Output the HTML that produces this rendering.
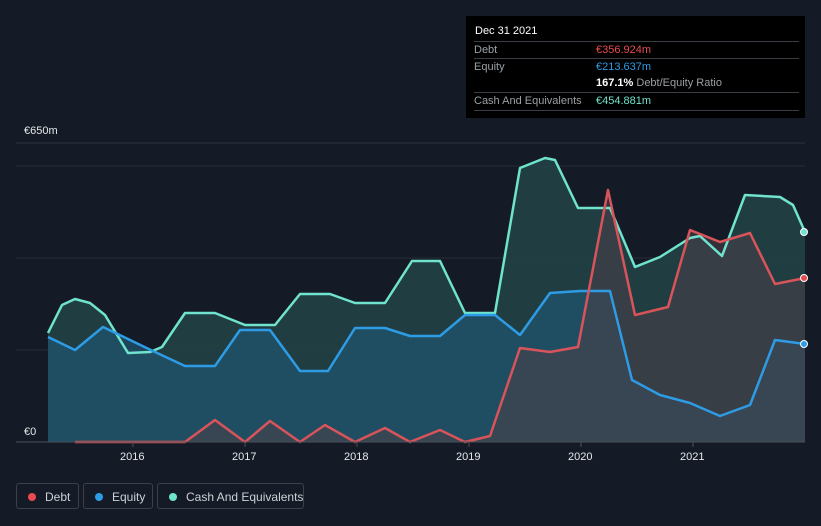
<!DOCTYPE html>
<html><head><style>
body{margin:0;background:#151b26;width:821px;height:526px;overflow:hidden;font-family:"Liberation Sans",sans-serif;position:relative}
.tip{position:absolute;left:466px;top:16px;width:339px;height:102px;background:#000;color:#fff;font-size:11px}
.row{position:absolute;left:8px;right:6px;height:17px;border-top:1px solid #3a3d44;line-height:17px;color:#9aa0a6}
.row span{position:absolute;left:122px}
.leg{position:absolute;top:483px;height:26px;border:1px solid #3b4049;border-radius:3px;color:#ccd0d6;font-size:12px;line-height:26px;box-sizing:border-box;white-space:nowrap}
.leg i{position:absolute;left:11px;top:9px;width:8px;height:8px;border-radius:50%}
.leg b{font-weight:normal;position:absolute;left:28px}
.ax{position:absolute;color:#e6e8ea;font-size:11px}
</style></head><body>
<svg width="821" height="526" style="position:absolute;left:0;top:0">
<line x1="16" y1="143" x2="805" y2="143" stroke="#2c323d"/>
<line x1="16" y1="166" x2="805" y2="166" stroke="#262c37"/>
<line x1="16" y1="258" x2="805" y2="258" stroke="#262c37"/>
<line x1="16" y1="350" x2="805" y2="350" stroke="#262c37"/>
<polygon fill="#23464a" fill-opacity="0.8" points="48,333 62,305 75,299 90,303 105,315 128,353 150,352 162,347 185,313 215,313 245,325 275,325 300,294 330,294 355,303 385,303 412,261 440,261 465,313 495,313 520,168 545,158 555,160 578,208 610,208 635,267 660,257 690,238 700,236 722,256 745,195 780,197 793,205 805,232 805,442 48,442"/>
<polygon fill="#1f5570" fill-opacity="0.7" points="48,337 75,350 103,327 130,340 155,352 185,366 215,366 240,330 270,330 300,371 328,371 355,328 385,328 410,336 440,336 465,315 495,315 520,335 550,293 580,291 610,291 632,380 660,395 690,403 720,416 750,405 775,340 805,344 805,442 48,442"/>
<polygon fill="#4a3f48" fill-opacity="0.6" points="75,442 185,442 215,420 245,442 270,421 300,442 325,425 355,442 385,428 410,442 440,430 465,442 490,436 520,348 550,352 578,347 608,190 635,315 668,307 690,230 720,242 750,233 775,284 805,278 805,442"/>
<polyline fill="none" stroke="#6fe3cd" stroke-width="2.5" stroke-linejoin="round" points="48,333 62,305 75,299 90,303 105,315 128,353 150,352 162,347 185,313 215,313 245,325 275,325 300,294 330,294 355,303 385,303 412,261 440,261 465,313 495,313 520,168 545,158 555,160 578,208 610,208 635,267 660,257 690,238 700,236 722,256 745,195 780,197 793,205 805,232"/>
<polyline fill="none" stroke="#2e9be5" stroke-width="2.5" stroke-linejoin="round" points="48,337 75,350 103,327 130,340 155,352 185,366 215,366 240,330 270,330 300,371 328,371 355,328 385,328 410,336 440,336 465,315 495,315 520,335 550,293 580,291 610,291 632,380 660,395 690,403 720,416 750,405 775,340 805,344"/>
<polyline fill="none" stroke="#d9545a" stroke-width="2.5" stroke-linejoin="round" points="75,442 185,442 215,420 245,442 270,421 300,442 325,425 355,442 385,428 410,442 440,430 465,442 490,436 520,348 550,352 578,347 608,190 635,315 668,307 690,230 720,242 750,233 775,284 805,278"/>
<line x1="16" y1="442" x2="805" y2="442" stroke="#4a505a"/>
<g stroke="#4a505a"><line x1="133" y1="442" x2="133" y2="447"/><line x1="245" y1="442" x2="245" y2="447"/><line x1="357" y1="442" x2="357" y2="447"/><line x1="469" y1="442" x2="469" y2="447"/><line x1="581" y1="442" x2="581" y2="447"/><line x1="693" y1="442" x2="693" y2="447"/></g>
<circle cx="804" cy="232" r="3.5" fill="#6fe3cd" stroke="#fff"/>
<circle cx="804" cy="278" r="3.5" fill="#e84b50" stroke="#fff"/>
<circle cx="804" cy="344" r="3.5" fill="#2e9be5" stroke="#fff"/>
</svg>
<div class="ax" style="left:24px;top:125px">€650m</div>
<div class="ax" style="left:24px;top:426px">€0</div>
<div class="ax" style="left:120px;top:451px">2016</div>
<div class="ax" style="left:232px;top:451px">2017</div>
<div class="ax" style="left:344px;top:451px">2018</div>
<div class="ax" style="left:456px;top:451px">2019</div>
<div class="ax" style="left:568px;top:451px">2020</div>
<div class="ax" style="left:680px;top:451px">2021</div>
<div class="tip">
<div style="position:absolute;left:9px;top:9px;font-size:11px">Dec 31 2021</div>
<div class="row" style="top:25px">Debt<span style="color:#e84b50">€356.924m</span></div>
<div class="row" style="top:42px">Equity<span style="color:#2e9be5">€213.637m</span></div>
<div class="row" style="top:59px;border-top:none"><span><b style="color:#fff">167.1%</b> Debt/Equity Ratio</span></div>
<div class="row" style="top:76px">Cash And Equivalents<span style="color:#6fe3cd">€454.881m</span></div>
<div style="position:absolute;left:8px;right:6px;top:94px;border-top:1px solid #3a3d44"></div>
</div>
<div class="leg" style="left:16px;width:63px"><i style="background:#e84b50"></i><b>Debt</b></div>
<div class="leg" style="left:83px;width:70px"><i style="background:#2e9be5"></i><b>Equity</b></div>
<div class="leg" style="left:157px;width:147px"><i style="background:#6fe3cd"></i><b>Cash And Equivalents</b></div>
</body></html>
